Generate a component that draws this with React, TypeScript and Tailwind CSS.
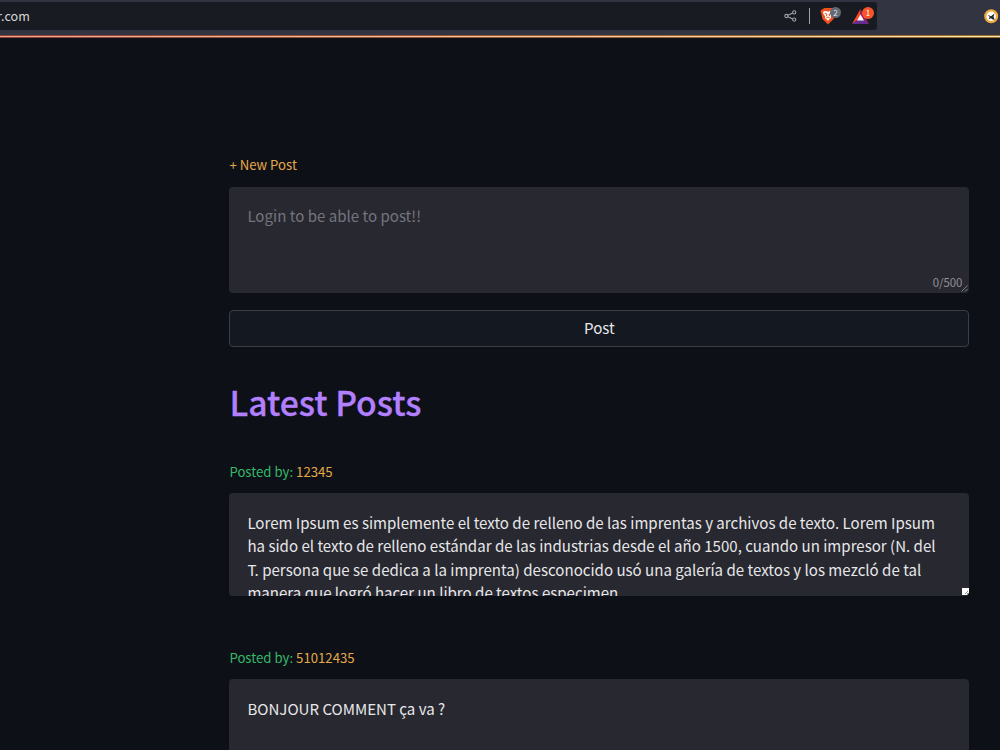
import type { ReactNode } from "react";

const loremLines = [
  "Lorem Ipsum es simplemente el texto de relleno de las imprentas y archivos de texto. Lorem Ipsum",
  "ha sido el texto de relleno estándar de las industrias desde el año 1500, cuando un impresor (N. del",
  "T. persona que se dedica a la imprenta) desconocido usó una galería de textos y los mezcló de tal",
  "manera que logró hacer un libro de textos especimen.",
];

function ShareIcon() {
  return (
    <svg width="13" height="12" viewBox="0 0 13 12" fill="none" stroke="#a0a3a9" strokeWidth="1.1">
      <circle cx="2.4" cy="6" r="1.6" />
      <circle cx="10.2" cy="2.4" r="1.6" />
      <circle cx="10.2" cy="9.6" r="1.6" />
      <path d="M3.9 5.3 8.7 3.1M3.9 6.7l4.8 2.2" />
    </svg>
  );
}

function BraveIcon() {
  return (
    <svg width="16" height="18" viewBox="0 0 16 18">
      <path d="M4 1h8l1.5 1.5 1.6.3.4 2-.8 1.7L13.6 12 8 17.5 2.4 12 1.3 6.5.5 4.8l.5-2 1.5-.3z" fill="#f0501f" />
      <path d="M3.5 4.2 6 4l2 .7 2-.7 2.5.2.4 2.1-2.1 3 .3 1.5L8 13.8 4.9 11l.3-1.5-2.1-3z" fill="#fff" />
      <path d="m4.7 6.4 2.3.8-.7 1.9M11.3 6.4 9 7.2l.7 1.9M6.2 11 8 10.1l1.8.9" fill="none" stroke="#f0501f" strokeWidth="1" />
    </svg>
  );
}

function BatIcon() {
  return (
    <svg width="17" height="15" viewBox="0 0 17 15">
      <path d="M8.5 0 0 15l8.5-6z" fill="#ff4724" />
      <path d="m8.5 0 8.5 15-8.5-6z" fill="#9e1f63" />
      <path d="M0 15h17l-5-4H5z" fill="#662d91" />
      <path d="M8.5 5.5 12 11.4H5z" fill="#fff" />
    </svg>
  );
}

function BrowserBar() {
  return (
    <header className="h-[38px]">
      <div className="flex h-[35px] items-start justify-between bg-[#323441]">
        <div className="mt-0.5 flex h-7 w-[877px] items-center rounded-r-[3px] bg-[#181b22]">
          <span className="-ml-[3px] w-[787px] text-[12.6px] leading-5 text-[#d7d8da]">r.com</span>
          <ShareIcon />
          <div className="ml-3 h-4 w-px bg-[#a0a2a7]" />
          <div className="relative ml-2.5 h-[18px] w-4">
            <BraveIcon />
            <span className="absolute top-0 left-[10px] flex h-[11px] w-[11px] items-center justify-center rounded-full bg-[#636a76] text-[8px] text-[#dfe1e5]">
              2
            </span>
          </div>
          <div className="relative ml-4 h-[15px] w-[17px]">
            <BatIcon />
            <span className="absolute -top-[2px] left-[10px] flex h-3 w-3 items-center justify-center rounded-full bg-[#fb542b] text-[8px] text-white">
              1
            </span>
          </div>
        </div>
        <svg className="mt-[9px] mr-px shrink-0" width="16" height="16" viewBox="0 0 16 16">
          <circle cx="8.2" cy="7.3" r="5.9" fill="#fff" stroke="#f0a93c" strokeWidth="2.2" />
          <path d="m4.8 5.8 3.2 1.5 3.5-2.8-1 3.6 1.4 2.7-2.3-.2-1.6-1.4-2.4 1 1.1-2.1z" fill="#25252a" />
        </svg>
      </div>
      <div className="h-[3px] bg-linear-to-r from-[#8d4238] to-[#997136] py-px">
        <div className="h-px bg-linear-to-r from-[#efa08d] to-[#fae3a2]" />
      </div>
    </header>
  );
}

function Box({ className, children }: { className: string; children: ReactNode }) {
  return (
    <div className={`relative overflow-hidden rounded bg-[#282830] px-[18px] ${className}`}>{children}</div>
  );
}

function Author({ name }: { name: string }) {
  return (
    <p className="text-[13.2px] leading-5 text-[#35b968]">
      Posted by: <span className="text-[#e5aa47]">{name}</span>
    </p>
  );
}

export default function App() {
  return (
    <div className="h-[750px] w-[1000px] overflow-hidden bg-[#0d1017] font-['Noto_Sans_CJK_SC',sans-serif] whitespace-nowrap">
      <BrowserBar />
      <main className="ml-[229.4px] w-[740px] pt-[117px]">
        <p className="text-[13.2px] leading-5 text-[#e5aa47]">+ New Post</p>
        <Box className="mt-3 h-[106px] pt-[17px] text-[15.07px] leading-6 text-[#74747e]">
          Login to be able to post!!
          <span className="absolute right-[7px] bottom-px text-[11.4px] leading-5 text-[#92929a]">0/500</span>
          <svg className="absolute right-px bottom-px" width="7" height="7" viewBox="0 0 7 7" stroke="#92929a" strokeWidth="0.8">
            <path d="M.5 6.5l6-6M4 6.5 6.5 4" />
          </svg>
        </Box>
        <button className="mt-[17px] block h-[37px] w-full rounded border border-[#3a3d45] bg-[#141820] pb-0.5 text-[15.07px] leading-6 text-[#e7e8ea]">
          Post
        </button>
        <h1 className="mt-[31px] text-[33.7px] leading-[48px] font-medium text-[#b27fff] [-webkit-text-stroke:0.3px_#b27fff]">
          Latest Posts
        </h1>
        <div className="mt-9">
          <Author name="12345" />
          <Box className="mt-[11px] h-[103px] pt-[18px] text-[15.07px] leading-[23.4px] text-[#e7e7e9]">
            {loremLines.map((line) => (
              <p key={line}>{line}</p>
            ))}
            <svg className="absolute right-0 bottom-px" width="7" height="7" viewBox="0 0 7 7">
              <path d="M0 0h7v5L5 7H0z" fill="#fff" />
              <path d="m3 6 3-3M5 6l1-1" stroke="#777" strokeWidth="0.8" />
            </svg>
          </Box>
        </div>
        <div className="mt-[52px]">
          <Author name="51012435" />
          <Box className="mt-[11px] h-[103px] pt-[18px] text-[15.07px] leading-[23.4px] text-[#e7e7e9]">
            <p>BONJOUR COMMENT ça va ?</p>
          </Box>
        </div>
      </main>
    </div>
  );
}
